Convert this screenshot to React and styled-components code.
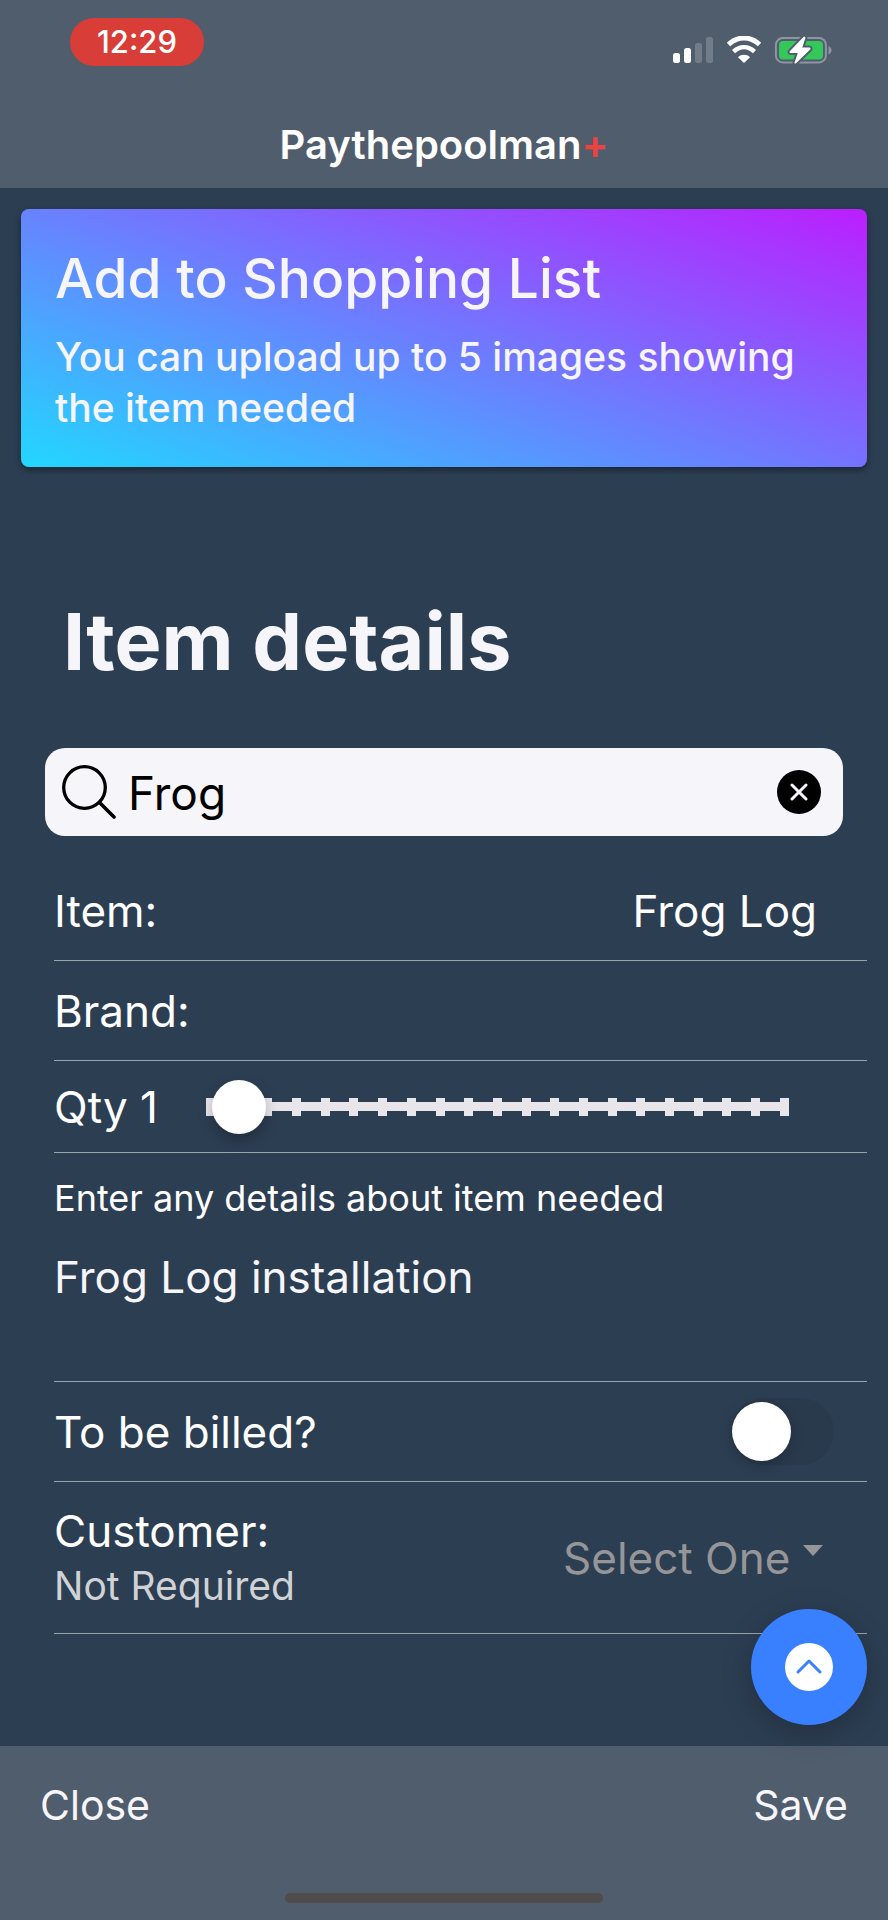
import React, { useState } from 'react';
import styled, { createGlobalStyle } from 'styled-components';

const QTY_MAX = 20;

const App = () => {
    const [search, setSearch] = useState('Frog');
    const [item, setItem] = useState('Frog Log');
    const [brand, setBrand] = useState('');
    const [qty, setQty] = useState(1);
    const [details, setDetails] = useState('Frog Log installation');
    const [billed, setBilled] = useState(false);

    return (
        <>
            <GlobalStyle />
            <Page>
                <Header>
                    <StatusBar>
                        <Clock>12:29</Clock>
                        <StatusIcons />
                    </StatusBar>
                    <AppTitle>Paythepoolman<Plus>+</Plus></AppTitle>
                </Header>

                <Main>
                    <Banner>
                        <BannerTitle>Add to Shopping List</BannerTitle>
                        <BannerText>You can upload up to 5 images showing the item needed</BannerText>
                    </Banner>

                    <SectionTitle>Item details</SectionTitle>

                    <SearchBar>
                        <SearchIcon />
                        <SearchInput
                            aria-label="Search items"
                            value={search}
                            onChange={(e) => setSearch(e.target.value)}
                        />
                        <ClearButton type="button" aria-label="Clear" onClick={() => setSearch('')}>
                            <svg width="18" height="18" viewBox="0 0 18 18">
                                <path d="M2 2L16 16M16 2L2 16" stroke="#f6f5fa" strokeWidth="3" strokeLinecap="round" />
                            </svg>
                        </ClearButton>
                    </SearchBar>

                    <Form>
                        <Row $height={100}>
                            <Label htmlFor="item">Item:</Label>
                            <RowInput id="item" value={item} onChange={(e) => setItem(e.target.value)} />
                        </Row>
                        <Row $height={100}>
                            <Label htmlFor="brand">Brand:</Label>
                            <RowInput id="brand" value={brand} onChange={(e) => setBrand(e.target.value)} />
                        </Row>
                        <Row $height={92}>
                            <QtyLabel htmlFor="qty">Qty {qty}</QtyLabel>
                            <Slider>
                                <Ticks>
                                    {Array.from({ length: QTY_MAX + 1 }, (_, i) => <Tick key={i} />)}
                                </Ticks>
                                <Range
                                    id="qty"
                                    type="range"
                                    min="0"
                                    max={QTY_MAX}
                                    value={qty}
                                    onChange={(e) => setQty(Number(e.target.value))}
                                />
                            </Slider>
                        </Row>
                        <DetailsRow>
                            <SmallLabel htmlFor="details">Enter any details about item needed</SmallLabel>
                            <Details
                                id="details"
                                rows={2}
                                value={details}
                                onChange={(e) => setDetails(e.target.value)}
                            />
                        </DetailsRow>
                        <Row $height={100}>
                            <Label htmlFor="billed">To be billed?</Label>
                            <Toggle
                                id="billed"
                                type="checkbox"
                                checked={billed}
                                onChange={(e) => setBilled(e.target.checked)}
                            />
                        </Row>
                        <Row $height={152}>
                            <div>
                                <Label htmlFor="customer">Customer:</Label>
                                <Hint>Not Required</Hint>
                            </div>
                            <SelectWrap>
                                <Select id="customer" defaultValue="">
                                    <option value="">Select One</option>
                                </Select>
                                <Caret />
                            </SelectWrap>
                        </Row>
                    </Form>

                    <Fab type="button" aria-label="More actions">
                        <svg width="48" height="48" viewBox="0 0 48 48" fill="none">
                            <circle cx="24" cy="24" r="24" fill="#fff" />
                            <path d="M13 29L24 18L35 29" stroke="#3880ff" strokeWidth="3" strokeLinecap="round" strokeLinejoin="round" />
                        </svg>
                    </Fab>
                </Main>

                <Footer>
                    <Actions>
                        <TextButton type="button">Close</TextButton>
                        <TextButton type="button">Save</TextButton>
                    </Actions>
                    <HomeIndicator />
                </Footer>
            </Page>
        </>
    );
}

const StatusIcons = () => (
    <svg width="160" height="30" viewBox="0 0 160 30" fill="none">
        <rect x="1" y="17" width="7" height="10" rx="2.5" fill="#fff" />
        <rect x="12" y="12" width="7" height="15" rx="2.5" fill="#fff" />
        <rect x="23" y="7" width="7" height="20" rx="2.5" fill="#fff" opacity="0.2" />
        <rect x="34" y="1" width="7" height="26" rx="2.5" fill="#fff" opacity="0.2" />

        <path d="M56.5 8.5C66 -0.2 78 -0.2 87.5 8.5" stroke="#fff" strokeWidth="5" />
        <path d="M61.5 15.6C68 9.8 76 9.8 82.5 15.6" stroke="#fff" strokeWidth="4.6" />
        <path d="M66 21.2C69.5 18 74.5 18 78 21.2L72 27Z" fill="#fff" />

        <rect x="103.9" y="1.9" width="50" height="24.5" rx="7" stroke="#8f95a3" strokeWidth="2" />
        <rect x="107" y="5" width="44" height="18.5" rx="4" fill="#34c759" />
        <path d="M156.5 10C160.500 11.5 160.500 17 156.500 18.5Z" fill="#8f95a3" />
        <path
            d="M131.5 1L117.8 15.2C117.2 16 117.6 17 118.6 17H125.8L122.5 26.5C122.2 27.5 123.3 28 124 27.2L138.2 13.5C139 12.6 138.5 11.5 137.4 11.5H130.3L133.4 2C133.6 0.8 132.3 0.2 131.5 1Z"
            fill="#fff"
            stroke="#505d6d"
            strokeWidth="4"
            paintOrder="stroke"
        />
    </svg>
);

const SearchIcon = () => (
    <svg width="54" height="54" viewBox="0 0 54 54" fill="none">
        <circle cx="22.5" cy="22.5" r="20.8" stroke="#000" strokeWidth="3.3" />
        <path d="M37.5 37.5L52 52" stroke="#000" strokeWidth="3.6" strokeLinecap="round" />
    </svg>
);

const GlobalStyle = createGlobalStyle`
    * {
        box-sizing: border-box;
    }
    body {
        margin: 0;
        background: #2c3e52;
        color: #fff;
        font-family: Inter, "Liberation Sans", sans-serif;
    }
    button, input, select, textarea {
        margin: 0;
        padding: 0;
        border: none;
        outline: none;
        background: none;
        color: inherit;
        font: inherit;
    }
`;

const Page = styled.div`
    display: flex;
    flex-direction: column;
    min-height: 100vh;
`;

const Header = styled.header`
    padding: 18px 56px 0 70px;
    height: 188px;
    background: #505d6d;
`;

const StatusBar = styled.div`
    display: flex;
    justify-content: space-between;
    align-items: flex-start;

    svg {
        margin-top: 18px;
    }
`;

const Clock = styled.div`
    width: 134px;
    border-radius: 24px;
    background: #d93d37;
    font-size: 31px;
    font-weight: 500;
    line-height: 48px;
    text-align: center;
`;

const AppTitle = styled.h1`
    margin: 54px 0 0 -14px;
    font-size: 40px;
    font-weight: 600;
    line-height: 50px;
    text-align: center;
`;

const Plus = styled.span`
    color: #f04141;
`;

const Main = styled.main`
    position: relative;
    flex: 1;
    padding: 21px 21px 0;
`;

const Banner = styled.section`
    padding: 34px;
    height: 258px;
    border-radius: 8px;
    background: linear-gradient(20deg, #22d7ff, #bb1eff);
    box-shadow: 0 3px 6px rgba(0, 0, 0, 0.4);
    color: #f6f5fa;
`;

const BannerTitle = styled.h2`
    margin: 0;
    font-size: 55px;
    font-weight: 500;
    line-height: 70px;
`;

const BannerText = styled.p`
    margin: 18px 0 0;
    font-size: 39px;
    font-weight: 500;
    line-height: 51px;
`;

const SectionTitle = styled.h2`
    margin: 124px 0 0 42px;
    color: #f6f5fa;
    font-size: 79px;
    font-weight: 700;
    line-height: 100px;
`;

const SearchBar = styled.div`
    display: flex;
    align-items: center;
    gap: 12px;
    margin: 57px 24px 0;
    padding: 0 22px 0 17px;
    height: 88px;
    border-radius: 20px;
    background: #f6f5fa;
    color: #000;
`;

const SearchInput = styled.input`
    flex: 1;
    min-width: 0;
    padding-top: 2px;
    font-size: 46px;
    line-height: 60px;
`;

const ClearButton = styled.button`
    display: flex;
    align-items: center;
    justify-content: center;
    width: 44px;
    height: 44px;
    border-radius: 50%;
    background: #000;
`;

const Form = styled.form`
    margin: 25px 0 0 33px;
`;

const Row = styled.div`
    display: flex;
    align-items: center;
    justify-content: space-between;
    height: ${props => props.$height}px;
    border-bottom: 1px solid #9ba3ad;
`;

const Label = styled.label`
    display: block;
    font-size: 44px;
    line-height: 56px;
`;

const QtyLabel = styled(Label)`
    flex: 0 0 129px;
`;

const SmallLabel = styled(Label)`
    font-size: 36px;
    line-height: 48px;
`;

const RowInput = styled.input`
    flex: 1;
    min-width: 0;
    margin-right: 50px;
    font-size: 44px;
    line-height: 56px;
    text-align: right;
`;

const Slider = styled.div`
    flex: 1;
    display: grid;
    align-items: center;
    margin-right: 55px;

    > * {
        grid-area: 1 / 1;
    }
`;

const Ticks = styled.div`
    display: flex;
    justify-content: space-between;
    margin: 0 23px;
    background: linear-gradient(#e8e6eb, #e8e6eb) center / 100% 9px no-repeat;
`;

const Tick = styled.span`
    width: 9px;
    height: 18px;
    background: #e8e6eb;
`;

const Range = styled.input`
    appearance: none;
    width: 100%;
    height: 54px;

    &::-webkit-slider-thumb {
        appearance: none;
        width: 54px;
        height: 54px;
        border-radius: 50%;
        background: #fff;
        box-shadow: 0 6px 14px rgba(0, 0, 0, 0.25);
    }
`;

const DetailsRow = styled.div`
    padding: 21px 50px 0 0;
    height: 229px;
    border-bottom: 1px solid #9ba3ad;
`;

const Details = styled.textarea`
    display: block;
    margin-top: 27px;
    width: 100%;
    color: #f6f5fa;
    font-size: 44px;
    line-height: 56px;
    resize: none;
`;

const Toggle = styled.input`
    appearance: none;
    margin-right: 33px;
    padding: 4px 1px;
    width: 103px;
    height: 67px;
    border-radius: 34px;
    background: #293a4c;

    &::before {
        content: '';
        display: block;
        width: 59px;
        height: 59px;
        border-radius: 50%;
        background: #fff;
        box-shadow: 0 4px 14px rgba(0, 0, 0, 0.2);
    }
    &:checked {
        padding-left: 43px;
        background: #34c759;
    }
`;

const Hint = styled.div`
    color: #d0d2d6;
    font-size: 39px;
    line-height: 54px;
`;

const SelectWrap = styled.div`
    display: flex;
    align-items: center;
    gap: 12px;
    margin-right: 44px;
    color: #969699;
`;

const Select = styled.select`
    appearance: none;
    font-size: 44px;
    line-height: 56px;
`;

const Caret = styled.span`
    margin-bottom: 14px;
    border: 10px solid transparent;
    border-top: 11px solid #969699;
    border-bottom: none;
`;

const Fab = styled.button`
    position: absolute;
    right: 21px;
    bottom: 21px;
    display: flex;
    align-items: center;
    justify-content: center;
    width: 116px;
    height: 116px;
    border-radius: 50%;
    background: #3880ff;
    box-shadow: 0 8px 30px rgba(0, 0, 0, 0.22);
`;

const Footer = styled.footer`
    display: flex;
    flex-direction: column;
    align-items: center;
    justify-content: space-between;
    padding: 32px 40px 17px;
    height: 174px;
    background: #505d6d;
`;

const Actions = styled.div`
    display: flex;
    justify-content: space-between;
    width: 100%;
`;

const TextButton = styled.button`
    color: #f6f5fa;
    font-size: 41px;
    line-height: 54px;
`;

const HomeIndicator = styled.div`
    width: 318px;
    height: 10px;
    border-radius: 5px;
    background: #504c4c;
`;

export default App;
